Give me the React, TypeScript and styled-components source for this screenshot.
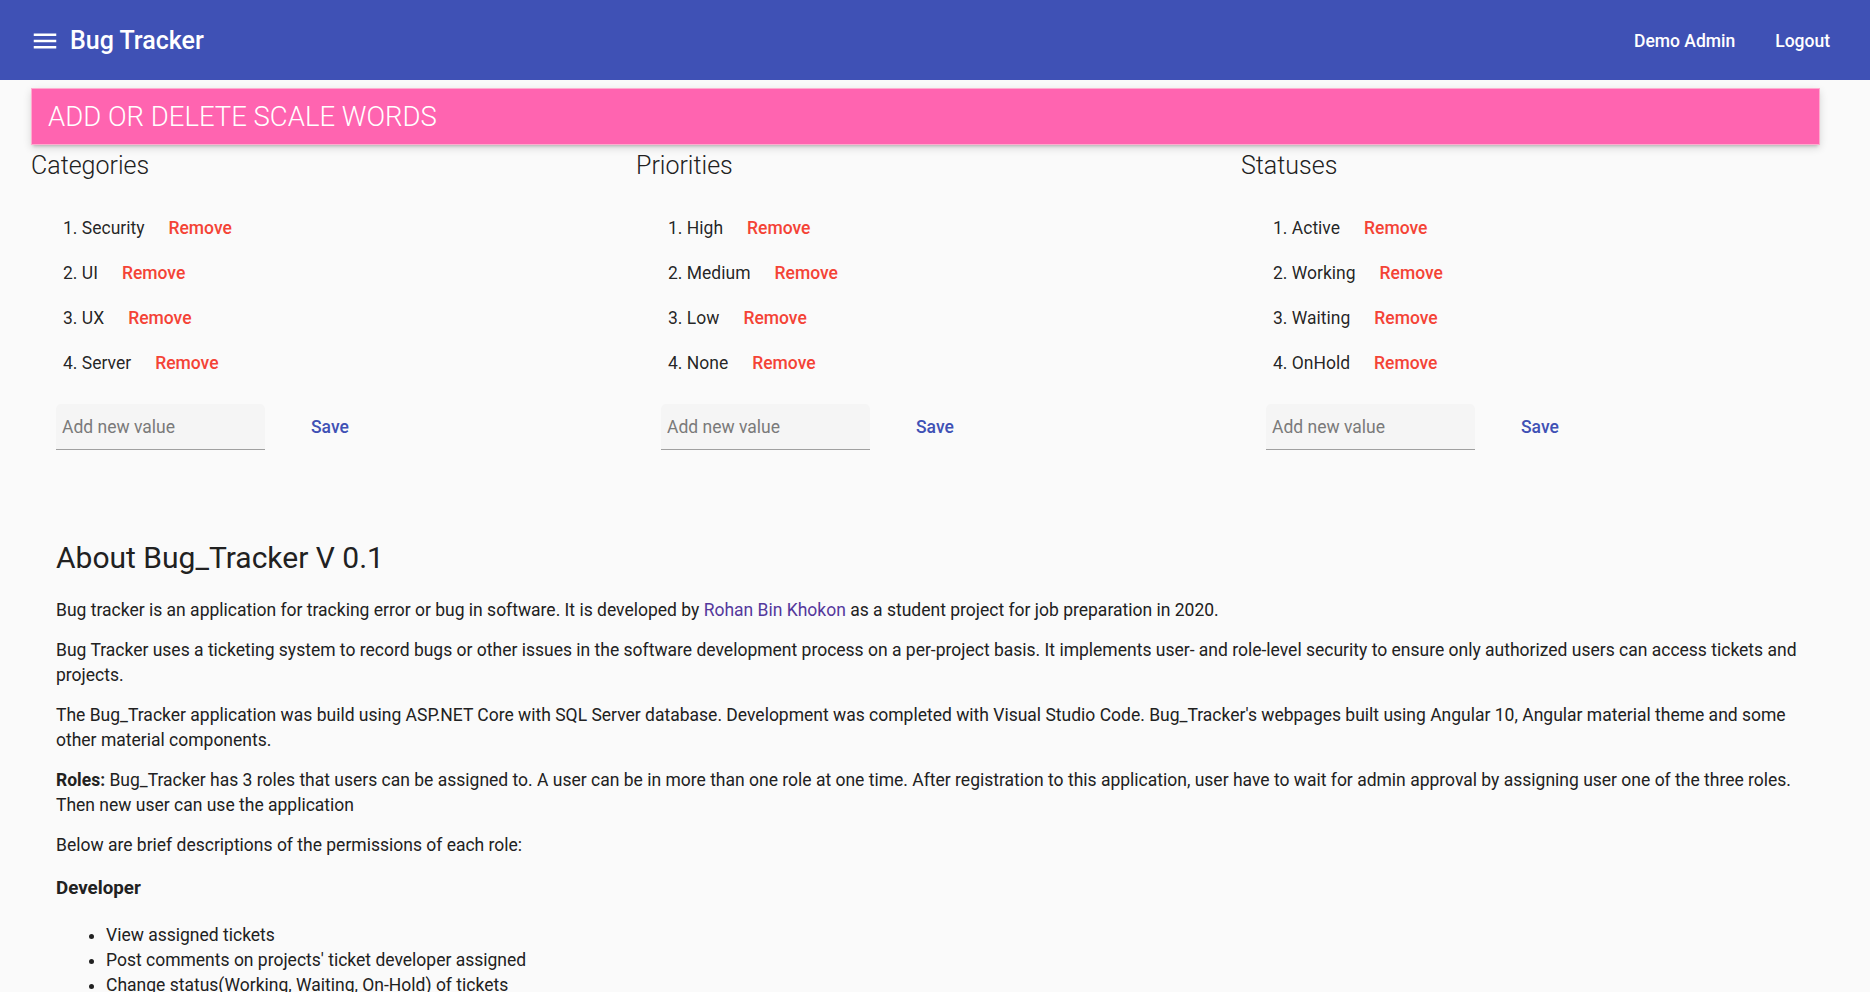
import React from "react";
import styled, { createGlobalStyle } from "styled-components";

const GlobalStyle = createGlobalStyle`
  html, body {
    margin: 0;
    padding: 0;
    background: #fafafa;
    font-family: Roboto, "Noto Sans", "Liberation Sans", sans-serif;
    color: rgba(0, 0, 0, 0.87);
  }
  * { box-sizing: border-box; }
`;

const Toolbar = styled.header`
  display: flex;
  align-items: center;
  height: 80px;
  padding: 2px 20px 0;
  background: #3f51b5;
  color: #fff;
`;

const MenuButton = styled.button`
  display: flex;
  align-items: center;
  justify-content: center;
  width: 50px;
  height: 50px;
  padding: 0;
  border: 0;
  background: transparent;
  color: #fff;
`;

const Title = styled.span`
  font: 500 25px/32px Roboto, sans-serif;
  letter-spacing: 0;
`;

const Spacer = styled.div`
  flex: 1;
`;

const NavButton = styled.button`
  height: 45px;
  padding: 0 20px;
  border: 0;
  background: transparent;
  color: #fff;
  font: 500 17.5px/45px Roboto, sans-serif;
`;

const Main = styled.main`
  padding: 8px 50px 40px 31px;
`;

const Banner = styled.div`
  display: flex;
  align-items: center;
  height: 57px;
  padding: 0 16px;
  background: #ff64b0;
  border: 1px solid #ffaccf;
  box-shadow: 0 3px 3px -2px rgba(0, 0, 0, 0.2), 0 3px 8px 0 rgba(0, 0, 0, 0.14);
`;

const BannerTitle = styled.h1`
  margin: 0;
  color: #fff;
  font: 300 27.5px/1 Roboto, sans-serif;
  text-transform: uppercase;
`;

const Columns = styled.section`
  display: grid;
  grid-template-columns: 605px 605px 1fr;
  margin-top: 1px;
`;

const Column = styled.div`
  display: flex;
  flex-direction: column;
`;

const ColumnTitle = styled.h3`
  margin: 0;
  font: 300 25px/40px Roboto, sans-serif;
  color: #212121;
`;

const ItemList = styled.ol`
  list-style: none;
  margin: 20px 0 0;
  padding: 0 0 0 32px;
`;

const Item = styled.li`
  display: flex;
  align-items: center;
  gap: 24px;
  height: 45px;
  font: 400 17.5px/25px Roboto, sans-serif;
`;

const TextButton = styled.button<{ $tone: "warn" | "primary" }>`
  border: 0;
  background: transparent;
  padding: 0;
  font: 500 17.5px/25px Roboto, sans-serif;
  color: ${(p) => (p.$tone === "warn" ? "#f44336" : "#3f51b5")};
  cursor: pointer;
`;

const AddRow = styled.div`
  display: flex;
  align-items: center;
  gap: 46px;
  margin-top: 18px;
  padding-left: 25px;
`;

const ValueInput = styled.input`
  width: 209px;
  height: 46px;
  padding: 0 6px;
  border: 0;
  border-bottom: 1px solid #a0a0a0;
  border-radius: 5px 5px 0 0;
  background: #f5f5f5;
  font: 400 17.5px Roboto, sans-serif;
  color: #212121;
  outline: none;
  &::placeholder {
    color: #7a7a7a;
  }
`;

const About = styled.section`
  margin-top: 88px;
  padding-left: 25px;
`;

const AboutTitle = styled.h2`
  margin: 0 0 20px;
  font: 400 30px/40px Roboto, sans-serif;
  color: #212121;
`;

const Paragraph = styled.p`
  margin: 0 0 15px;
  font: 400 17.5px/25px Roboto, sans-serif;
  color: #212121;
`;

const Strong = styled.strong`
  font-weight: 700;
`;

const Link = styled.a`
  color: #54389c;
  text-decoration: none;
`;

const RoleTitle = styled.h4`
  margin: 0 0 20px;
  font: 700 18.75px/30px Roboto, sans-serif;
  color: #212121;
`;

const BulletList = styled.ul`
  margin: 0;
  padding-left: 50px;
  font: 400 17.5px/25px Roboto, sans-serif;
  color: #212121;
`;

const MenuIcon = () => (
  <svg width="30" height="30" viewBox="0 0 24 24" fill="currentColor">
    <path d="M3 18h18v-2H3v2zm0-5h18v-2H3v2zm0-7v2h18V6H3z" />
  </svg>
);

type Scale = { title: string; items: string[] };

const scales: Scale[] = [
  { title: "Categories", items: ["Security", "UI", "UX", "Server"] },
  { title: "Priorities", items: ["High", "Medium", "Low", "None"] },
  { title: "Statuses", items: ["Active", "Working", "Waiting", "OnHold"] },
];

export default function App() {
  return (
    <>
      <GlobalStyle />
      <Toolbar>
        <MenuButton aria-label="menu">
          <MenuIcon />
        </MenuButton>
        <Title>Bug Tracker</Title>
        <Spacer />
        <NavButton>Demo Admin</NavButton>
        <NavButton>Logout</NavButton>
      </Toolbar>
      <Main>
        <Banner>
          <BannerTitle>Add or delete scale words</BannerTitle>
        </Banner>
        <Columns>
          {scales.map((s) => (
            <Column key={s.title}>
              <ColumnTitle>{s.title}</ColumnTitle>
              <ItemList>
                {s.items.map((it, i) => (
                  <Item key={it}>
                    <span>
                      {i + 1}. {it}
                    </span>
                    <TextButton $tone="warn">Remove</TextButton>
                  </Item>
                ))}
              </ItemList>
              <AddRow>
                <ValueInput placeholder="Add new value" />
                <TextButton $tone="primary">Save</TextButton>
              </AddRow>
            </Column>
          ))}
        </Columns>
        <About>
          <AboutTitle>About Bug_Tracker V 0.1</AboutTitle>
          <Paragraph>
            Bug tracker is an application for tracking error or bug in software. It is developed by{" "}
            <Link href="#">Rohan Bin Khokon</Link> as a student project for job preparation in 2020.
          </Paragraph>
          <Paragraph>
            Bug Tracker uses a ticketing system to record bugs or other issues in the software development process on a
            per-project basis. It implements user- and role-level security to ensure only authorized users can access
            tickets and projects.
          </Paragraph>
          <Paragraph>
            The Bug_Tracker application was build using ASP.NET Core with SQL Server database. Development was completed
            with Visual Studio Code. Bug_Tracker's webpages built using Angular 10, Angular material theme and some other
            material components.
          </Paragraph>
          <Paragraph>
            <Strong>Roles:</Strong> Bug_Tracker has 3 roles that users can be assigned to. A user can be in more than one
            role at one time. After registration to this application, user have to wait for admin approval by assigning
            user one of the three roles. Then new user can use the application
          </Paragraph>
          <Paragraph>Below are brief descriptions of the permissions of each role:</Paragraph>
          <RoleTitle>Developer</RoleTitle>
          <BulletList>
            <li>View assigned tickets</li>
            <li>Post comments on projects' ticket developer assigned</li>
            <li>Change status(Working, Waiting, On-Hold) of tickets</li>
          </BulletList>
        </About>
      </Main>
    </>
  );
}
